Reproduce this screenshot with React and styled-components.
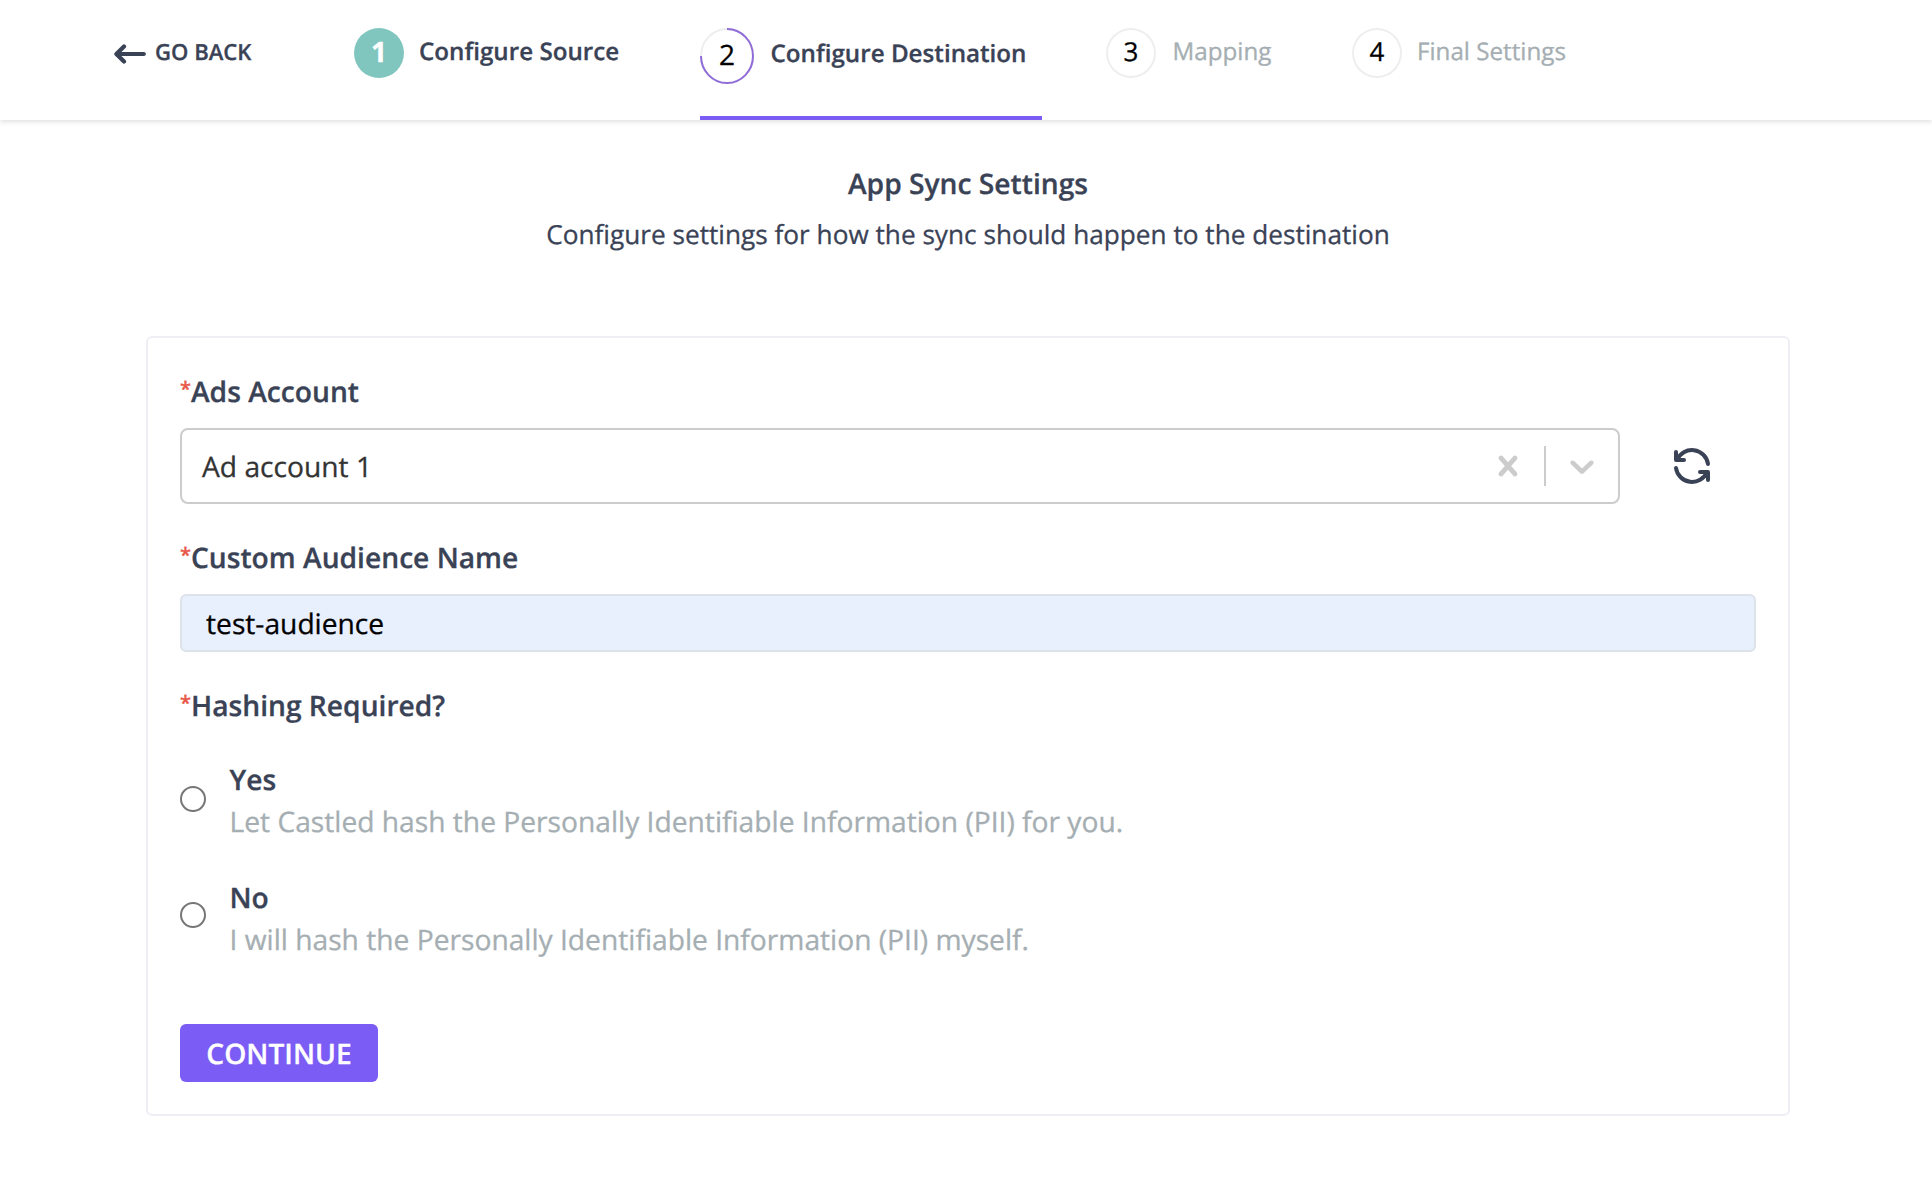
import React from "react";
import styled, { createGlobalStyle } from "styled-components";

const ink = "#3a4256";
const muted = "#a5aeb2";
const purple = "#7b5cf5";

const GlobalStyle = createGlobalStyle`
  *, *::before, *::after { box-sizing: border-box; }
  body {
    margin: 0;
    background: #fff;
    color: ${ink};
    font-family: "Open Sans", "Noto Sans", sans-serif;
    font-size: 28.2px;
    line-height: 38px;
    text-rendering: geometricPrecision;
    -webkit-text-stroke: 0.3px currentColor;
  }
`;

const Header = styled.header`
  display: grid;
  grid-template-columns: 240px 346px 406px 246px auto;
  align-items: start;
  height: 120px;
  padding: 28px 0 0 114px;
  box-shadow: 0 2px 5px rgba(0, 0, 0, 0.12);
`;

const BackLink = styled.a`
  display: flex;
  gap: 8px;
  font-size: 22.1px;
  font-weight: 600;
  line-height: 48px;
  color: ${ink};

  svg { margin-top: 14px; }
`;

const Step = styled.div`
  display: flex;
  align-items: flex-start;
  gap: ${(p) => p.$gap || 15}px;
`;

const ActiveStep = styled(Step)`
  width: 342px;
  height: 92px;
  border-bottom: 4px solid ${purple};
`;

const StepLabel = styled.span`
  font-size: 24.2px;
  font-weight: ${(p) => (p.$muted ? 400 : 600)};
  line-height: ${(p) => (p.$active ? 51 : 47)}px;
  color: ${(p) => (p.$muted ? muted : ink)};
  white-space: nowrap;
`;

const Circle = styled.span`
  width: 50px;
  height: 50px;
  flex: none;
  border-radius: 50%;
  box-shadow: inset 0 0 0 2px #eeeeee;
  color: #000;
  font-size: 26px;
  line-height: 46px;
  text-align: center;
`;

const DoneCircle = styled(Circle)`
  background: #80c6bf;
  box-shadow: none;
  color: #fff;
  font-size: 28px;
  font-weight: 700;
  line-height: 48px;
`;

const ProgressCircle = styled.span`
  position: relative;
  width: 54px;
  height: 56px;
  flex: none;
  color: #000;
  font-size: 28px;
  line-height: 54px;
  text-align: center;

  svg { position: absolute; inset: 0; }
`;

const Main = styled.main`
  padding: 45px 142px 68px 146px;
`;

const Title = styled.h1`
  margin: 0 0 13px;
  font-size: 28.2px;
  font-weight: 600;
  text-align: center;
`;

const Subtitle = styled.p`
  margin: 0 0 84px;
  font-size: 26.19px;
  line-height: 36px;
  text-align: center;
`;

const Card = styled.form`
  display: flex;
  flex-direction: column;
  align-items: stretch;
  border: 2px solid #eeeef5;
  border-radius: 6px;
  padding: 35px 32px 32px;
`;

const Label = styled.label`
  height: 38px;
  margin-bottom: 17px;
  font-weight: 600;
`;

const Required = styled.span`
  color: #e95848;
  font-size: 20px;
  font-weight: 600;
  line-height: 0;
  vertical-align: 6px;
`;

const SelectRow = styled.div`
  display: flex;
  align-items: center;
  gap: 48px;
  margin-bottom: 35px;
`;

const Select = styled.div`
  display: flex;
  align-items: center;
  width: 1440px;
  height: 76px;
  padding: 0 16px 0 20px;
  border: 2px solid #ccc;
  border-radius: 8px;
  color: #333;
`;

const SelectValue = styled.span`
  flex: 1;
  padding-top: 2px;
`;

const Divider = styled.span`
  width: 2px;
  height: 40px;
  margin: 0 16px;
  background: #ccc;
`;

const TextInput = styled.input`
  height: 58px;
  margin: 0 0 35px;
  padding: 2px 24px 0;
  border: 2px solid #dee2ea;
  border-radius: 6px;
  background: #e8effd;
  color: #000;
  font: inherit;
  text-rendering: inherit;
  outline: none;
`;

const Option = styled.label`
  display: flex;
  align-items: flex-start;
  gap: 23.5px;
  margin-top: ${(p) => p.$top}px;
`;

const Radio = styled.input`
  appearance: none;
  width: 26px;
  height: 26px;
  flex: none;
  margin: ${(p) => p.$offset}px 0 0;
  border: 2px solid #767676;
  border-radius: 50%;
  background: #fff;
`;

const OptionText = styled.span`
  display: flex;
  flex-direction: column;
  gap: 4px;
`;

const OptionName = styled.span`
  font-weight: 600;
`;

const OptionHint = styled.span`
  color: ${muted};
`;

const Submit = styled.button`
  align-self: flex-start;
  width: 198px;
  height: 58px;
  margin: 65px 0 0;
  padding: 2px 0 0;
  border: 0;
  border-radius: 6px;
  background: ${purple};
  color: #fff;
  font: inherit;
  font-weight: 600;
  text-rendering: inherit;
`;

const BackArrow = () => (
  <svg width="33" height="24" viewBox="0 0 33 24" fill="none" stroke={ink} strokeWidth="4.2" strokeLinecap="round" strokeLinejoin="round">
    <path d="M3 12H29.8M10 4.4L2.4 12L10 19.6" />
  </svg>
);

const ProgressRing = () => (
  <svg width="54" height="56" viewBox="0 0 54 56" fill="none" strokeWidth="2">
    <ellipse cx="27" cy="28" rx="26" ry="27" stroke="#eeeeee" />
    <path d="M27 1A26 27 0 1 1 1 28" stroke="#8f6cd8" />
  </svg>
);

const ClearIcon = () => (
  <svg width="40" height="40" viewBox="0 0 20 20" fill="#ccc">
    <path d="M14.348 14.849c-0.469 0.469-1.229 0.469-1.697 0l-2.651-3.030-2.651 3.029c-0.469 0.469-1.229 0.469-1.697 0-0.469-0.469-0.469-1.229 0-1.697l2.758-3.15-2.759-3.152c-0.469-0.469-0.469-1.228 0-1.697s1.228-0.469 1.697 0l2.652 3.031 2.651-3.031c0.469-0.469 1.228-0.469 1.697 0s0.469 1.229 0 1.697l-2.758 3.152 2.758 3.15c0.469 0.469 0.469 1.229 0 1.698z" />
  </svg>
);

const ChevronIcon = () => (
  <svg width="40" height="40" viewBox="0 0 20 20" fill="#ccc">
    <path d="M4.516 7.548c0.436-0.446 1.043-0.481 1.576 0l3.908 3.747 3.908-3.747c0.533-0.481 1.141-0.446 1.574 0 0.436 0.445 0.408 1.197 0 1.615-0.406 0.418-4.695 4.502-4.695 4.502-0.217 0.223-0.502 0.335-0.787 0.335s-0.57-0.112-0.789-0.335c0 0-4.287-4.084-4.695-4.502s-0.436-1.17 0-1.615z" />
  </svg>
);

const RefreshIcon = () => (
  <svg width="48" height="48" viewBox="0 0 24 24" fill="none" stroke={ink} strokeWidth="2" strokeLinecap="round" strokeLinejoin="round">
    <path d="M20 11a8.1 8.1 0 0 0 -15.5 -2m-.5 -4v4h4" />
    <path d="M4 13a8.1 8.1 0 0 0 15.5 2m.5 4v-4h-4" />
  </svg>
);

const hashingOptions = [
  { name: "Yes", hint: "Let Castled hash the Personally Identifiable Information (PII) for you.", top: 19, offset: 25 },
  { name: "No", hint: "I will hash the Personally Identifiable Information (PII) myself.", top: 38, offset: 23 },
];

export default function App() {
  return (
    <>
      <GlobalStyle />
      <Header>
        <BackLink><BackArrow />GO BACK</BackLink>
        <Step><DoneCircle>1</DoneCircle><StepLabel>Configure Source</StepLabel></Step>
        <ActiveStep $gap={16.5}>
          <ProgressCircle><ProgressRing />2</ProgressCircle>
          <StepLabel $active>Configure Destination</StepLabel>
        </ActiveStep>
        <Step $gap={16.5}><Circle>3</Circle><StepLabel $muted>Mapping</StepLabel></Step>
        <Step><Circle>4</Circle><StepLabel $muted>Final Settings</StepLabel></Step>
      </Header>
      <Main>
        <Title>App Sync Settings</Title>
        <Subtitle>Configure settings for how the sync should happen to the destination</Subtitle>
        <Card>
          <Label><Required>*</Required>Ads Account</Label>
          <SelectRow>
            <Select>
              <SelectValue>Ad account 1</SelectValue>
              <ClearIcon />
              <Divider />
              <ChevronIcon />
            </Select>
            <RefreshIcon />
          </SelectRow>
          <Label htmlFor="audience"><Required>*</Required>Custom Audience Name</Label>
          <TextInput id="audience" defaultValue="test-audience" />
          <Label><Required>*</Required>Hashing Required?</Label>
          {hashingOptions.map((o) => (
            <Option key={o.name} $top={o.top}>
              <Radio type="radio" name="hashing" $offset={o.offset} />
              <OptionText>
                <OptionName>{o.name}</OptionName>
                <OptionHint>{o.hint}</OptionHint>
              </OptionText>
            </Option>
          ))}
          <Submit type="button">CONTINUE</Submit>
        </Card>
      </Main>
    </>
  );
}
